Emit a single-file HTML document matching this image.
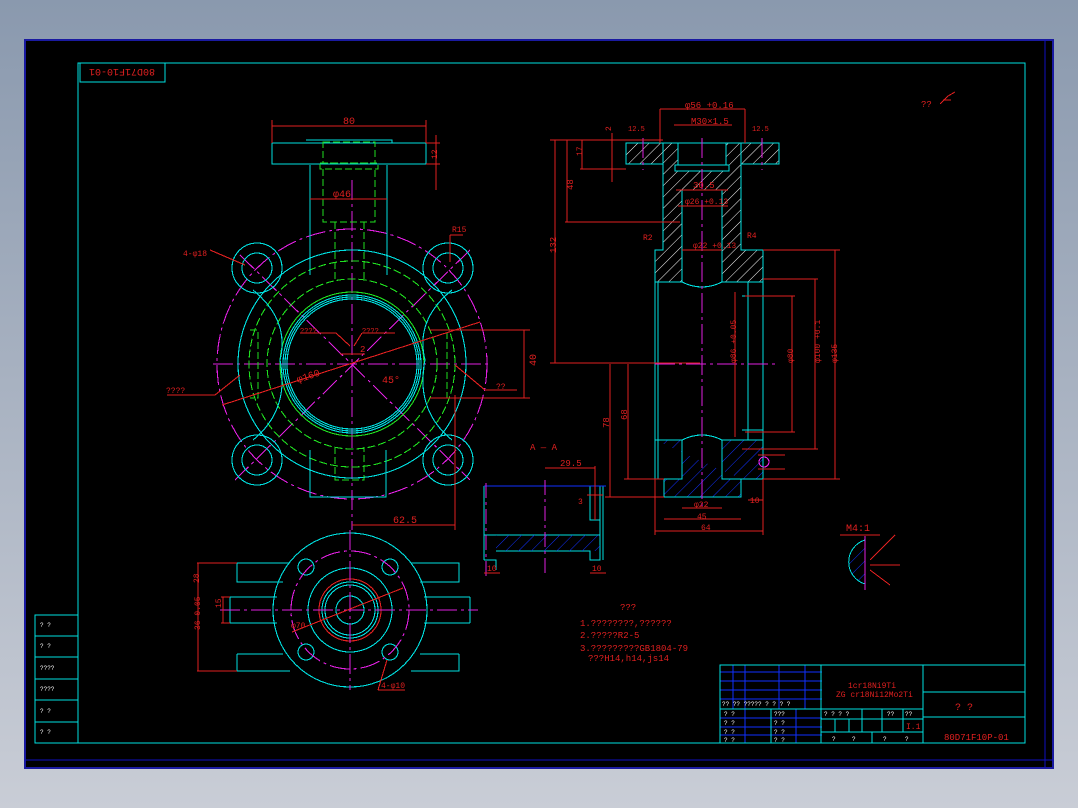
<!DOCTYPE html>
<html><head><meta charset="utf-8"><style>
html,body{margin:0;padding:0;width:1078px;height:808px;overflow:hidden;background:linear-gradient(#8a99ae,#c9cdd6);}
svg{position:absolute;left:0;top:0}
svg line,svg path,svg rect,svg circle{shape-rendering:crispEdges}
text{font-family:"Liberation Mono",monospace;}
</style></head><body>
<svg width="1078" height="808" viewBox="0 0 1078 808">
<defs>
<pattern id="hw" width="8" height="8" patternUnits="userSpaceOnUse" patternTransform="rotate(45)"><line x1="0" y1="0" x2="0" y2="8" stroke="#fff" stroke-width="1"/></pattern>
<pattern id="hb" width="9" height="9" patternUnits="userSpaceOnUse" patternTransform="rotate(45)"><line x1="0" y1="0" x2="0" y2="9" stroke="#1030ff" stroke-width="1"/></pattern>
</defs>
<rect x="25" y="40" width="1028" height="728" fill="#000" stroke="#1a1aa0" stroke-width="2"/>
<line x1="25" y1="760" x2="1053" y2="760" stroke="#1010c0"/>
<line x1="1045" y1="40" x2="1045" y2="768" stroke="#1010c0"/>
<rect x="78" y="63" width="947" height="680" fill="none" stroke="#00e0e0" stroke-width="1.3"/>
<rect x="80" y="63" width="85" height="19" fill="none" stroke="#00e0e0"/>
<text x="122" y="77" fill="#e02020" font-size="10" text-anchor="middle" transform="rotate(180 122 73)">80D71F10-01</text>
<!-- left strip -->
<g stroke="#00e0e0" fill="none"><rect x="35" y="615" width="43" height="128"/>
<line x1="35" y1="636" x2="78" y2="636"/><line x1="35" y1="657" x2="78" y2="657"/><line x1="35" y1="679" x2="78" y2="679"/><line x1="35" y1="700" x2="78" y2="700"/><line x1="35" y1="722" x2="78" y2="722"/></g>
<g fill="#fff" font-size="6"><text x="40" y="627">? ?</text><text x="40" y="648">? ?</text><text x="40" y="670">????</text><text x="40" y="691">????</text><text x="40" y="713">? ?</text><text x="40" y="734">? ?</text></g>

<!-- FRONT VIEW -->
<g fill="none" stroke-width="1.1">
<circle cx="352" cy="364" r="135" stroke="#e020e0" stroke-dasharray="20 4 3 4"/>
<line x1="213" y1="364" x2="492" y2="364" stroke="#e020e0" stroke-dasharray="20 4 3 4"/>
<line x1="352" y1="180" x2="352" y2="530" stroke="#e020e0" stroke-dasharray="20 4 3 4"/>
<line x1="240" y1="255" x2="470" y2="480" stroke="#e020e0" stroke-dasharray="20 4 3 4"/>
<line x1="470" y1="250" x2="235" y2="480" stroke="#e020e0" stroke-dasharray="20 4 3 4"/>
<circle cx="352" cy="364" r="114" stroke="#00e0e0"/>
<circle cx="352" cy="364" r="103" stroke="#20e020" stroke-dasharray="8 3"/>
<circle cx="352" cy="364" r="85" stroke="#20e020" stroke-dasharray="8 3"/>
<circle cx="352" cy="364" r="72" stroke="#20e020"/>
<circle cx="352" cy="364" r="69" stroke="#00e0e0"/>
<circle cx="352" cy="364" r="67" stroke="#00e0e0"/>
<circle cx="352" cy="364" r="65" stroke="#00e0e0"/>
<g stroke="#00e0e0">
<circle cx="257" cy="268" r="25"/><circle cx="257" cy="268" r="15"/>
<circle cx="448" cy="268" r="25"/><circle cx="448" cy="268" r="15"/>
<circle cx="257" cy="460" r="25"/><circle cx="257" cy="460" r="15"/>
<circle cx="448" cy="460" r="25"/><circle cx="448" cy="460" r="15"/>
<path d="M272 143H426V164H272Z M306 140H392V143"/>
<path d="M310 165V275 M387 165V275 M310 450V497H386V450"/>
<path d="M253 290 Q290 320 280 360 Q290 410 253 440 M452 290 Q415 320 425 360 Q415 410 452 440"/>
</g>
<g stroke="#20e020" stroke-dasharray="7 3">
<rect x="323" y="142" width="52" height="21"/><rect x="320" y="163" width="58" height="6"/>
<path d="M323 169V222H375V169 M335 222V280 M364 222V280 M335 447V480H364V447"/>
<path d="M250 330H258V398H250 M455 330H447V398H455"/>
</g>
<g stroke="#e02020">
<line x1="272" y1="126" x2="426" y2="126"/><line x1="272" y1="120" x2="272" y2="143"/><line x1="426" y1="120" x2="426" y2="143"/>
<line x1="436" y1="135" x2="436" y2="190"/><line x1="426" y1="143" x2="440" y2="143"/><line x1="426" y1="164" x2="440" y2="164"/>
<line x1="310" y1="199" x2="387" y2="199"/>
<line x1="222" y1="405" x2="480" y2="322"/>
<line x1="430" y1="330" x2="530" y2="330"/><line x1="430" y1="398" x2="530" y2="398"/><line x1="524" y1="330" x2="524" y2="398"/>
<line x1="455" y1="365" x2="485" y2="390"/><line x1="485" y1="390" x2="517" y2="390"/>
<line x1="455" y1="395" x2="455" y2="530"/><line x1="352" y1="525" x2="455" y2="525"/>
<line x1="167" y1="395" x2="215" y2="395"/><line x1="215" y1="395" x2="240" y2="375"/>
<line x1="210" y1="250" x2="245" y2="265"/><line x1="450" y1="235" x2="450" y2="262"/><line x1="450" y1="235" x2="463" y2="235"/>
<line x1="300" y1="333" x2="336" y2="333"/><line x1="336" y1="333" x2="350" y2="346"/><line x1="362" y1="333" x2="395" y2="333"/><line x1="362" y1="333" x2="354" y2="346"/>
<line x1="340" y1="354" x2="365" y2="354"/>
</g>
</g>
<g fill="#e02020" font-size="10">
<text x="343" y="124">80</text><text x="333" y="197">φ46</text>
<text x="428" y="160" font-size="8" transform="rotate(-90 432 155)">12</text>
<text x="183" y="256" font-size="8">4-φ18</text><text x="452" y="232" font-size="8">R15</text>
<text x="300" y="333" font-size="7">????</text><text x="362" y="333" font-size="7">????</text>
<text x="360" y="352" font-size="9">2</text>
<text x="297" y="382" transform="rotate(-18 300 380)">φ160</text>
<text x="382" y="383">45°</text><text x="496" y="389" font-size="8">??</text>
<text x="166" y="393" font-size="8">????</text>
<text x="533" y="369" transform="rotate(-90 533 366)">40</text>
<text x="393" y="523">62.5</text>
</g>

<!-- SIDE SECTION -->
<g fill="none" stroke-width="1.1">
<path d="M626 143H663V164H626Z M741 143H779V164H741Z" fill="url(#hw)" stroke="#00e0e0"/>
<path d="M663 143H741V250H763V282H722V250H722V190H682V250H682V282H655V250H663Z" fill="url(#hw)" stroke="#00e0e0"/>
<rect x="678" y="143" width="48" height="22" fill="#000" stroke="#00e0e0"/>
<rect x="675" y="165" width="54" height="6" fill="#000" stroke="#00e0e0"/>
<path d="M655 440H682V479H664V497H741V479H722V440H763V479H741" fill="url(#hb)" stroke="#00e0e0"/>
<path d="M655 282V479 M658 282V479 M763 282V479 M748 282V440 M742 296H763 M742 430H763 M682 282Q702 292 722 282 M682 440Q702 430 722 440" stroke="#00e0e0"/>
<g stroke="#00e0e0"><path d="M655 250V479 M763 250V479 M664 479V497H741V479"/></g>
<g stroke="#e020e0" stroke-dasharray="20 4 3 4"><line x1="702" y1="138" x2="702" y2="510"/><line x1="655" y1="364" x2="775" y2="364"/><line x1="643" y1="138" x2="643" y2="170"/><line x1="762" y1="138" x2="762" y2="170"/></g>
<circle cx="764" cy="462" r="5" stroke="#e020e0"/>
<g stroke="#e02020">
<line x1="660" y1="109" x2="745" y2="109"/><line x1="660" y1="109" x2="660" y2="143"/><line x1="745" y1="109" x2="745" y2="143"/>
<line x1="674" y1="125" x2="732" y2="125"/>
<line x1="550" y1="140" x2="663" y2="140"/><line x1="555" y1="140" x2="555" y2="363"/><line x1="550" y1="363" x2="700" y2="363"/>
<line x1="567" y1="140" x2="567" y2="222"/><line x1="565" y1="222" x2="680" y2="222"/>
<line x1="582" y1="140" x2="582" y2="169"/><line x1="580" y1="169" x2="626" y2="169"/>
<line x1="612" y1="133" x2="612" y2="182"/>
<line x1="676" y1="190" x2="728" y2="190"/><line x1="678" y1="206" x2="728" y2="206"/><line x1="682" y1="250" x2="722" y2="250"/>
<line x1="763" y1="250" x2="840" y2="250"/><line x1="835" y1="250" x2="835" y2="479"/><line x1="763" y1="479" x2="840" y2="479"/>
<line x1="763" y1="279" x2="818" y2="279"/><line x1="815" y1="279" x2="815" y2="449"/><line x1="742" y1="449" x2="818" y2="449"/>
<line x1="745" y1="296" x2="795" y2="296"/><line x1="792" y1="296" x2="792" y2="432"/><line x1="745" y1="432" x2="795" y2="432"/>
<line x1="735" y1="292" x2="735" y2="437"/>
<line x1="610" y1="364" x2="610" y2="497"/><line x1="605" y1="497" x2="664" y2="497"/>
<line x1="628" y1="364" x2="628" y2="479"/><line x1="624" y1="479" x2="664" y2="479"/>
<line x1="682" y1="508" x2="722" y2="508"/><line x1="664" y1="519" x2="741" y2="519"/><line x1="655" y1="531" x2="763" y2="531"/>
<line x1="655" y1="479" x2="655" y2="535"/><line x1="763" y1="479" x2="763" y2="535"/>
<line x1="748" y1="500" x2="763" y2="500"/>
<line x1="758" y1="455" x2="785" y2="455"/><line x1="758" y1="469" x2="785" y2="469"/>
</g>
</g>
<g fill="#e02020" font-size="9">
<text x="685" y="108">φ56 +0.16</text><text x="691" y="124">M30×1.5</text>
<text x="693" y="188">30.5</text><text x="685" y="204" font-size="8">φ26 +0.13</text>
<text x="693" y="248" font-size="8">φ22 +0.13</text>
<text x="566" y="197" transform="rotate(-90 566 190)">48</text>
<text x="553" y="260" transform="rotate(-90 551 255)">132</text>
<text x="580" y="162" font-size="8" transform="rotate(-90 578 158)">17</text>
<text x="611" y="135" font-size="8" transform="rotate(-90 609 133)">2</text>
<text x="628" y="131" font-size="7">12.5</text><text x="752" y="131" font-size="7">12.5</text>
<text x="608" y="433" transform="rotate(-90 606 430)">78</text>
<text x="626" y="425" transform="rotate(-90 624 422)">68</text>
<text x="733" y="370" font-size="8" transform="rotate(-90 731 365)">φ86 +0.05</text>
<text x="790" y="370" font-size="8" transform="rotate(-90 788 365)">φ80</text>
<text x="812" y="375" font-size="8" transform="rotate(-90 810 365)">φ100 +0.1</text>
<text x="832" y="372" font-size="8" transform="rotate(-90 830 365)">φ135</text>
<text x="694" y="507" font-size="8">φ22</text><text x="697" y="519" font-size="8">45</text>
<text x="701" y="530" font-size="8">64</text><text x="750" y="503" font-size="8">10</text>
<text x="643" y="240" font-size="8">R2</text><text x="747" y="238" font-size="8">R4</text>
</g>

<!-- SECTION A-A -->
<g fill="none" stroke-width="1.1">
<text x="530" y="450" fill="#e02020" font-size="9" stroke="none">A — A</text>
<path d="M484 486H590 M484 486V560 M484 560H496V570 M484 535H600V560H590V551H496" stroke="#00e0e0"/>
<path d="M496 535H600V551H590V551H496Z" fill="url(#hb)" stroke="none"/>
<path d="M600 486V535 M603 486V560 M590 486V520H600" stroke="#00e0e0"/>
<path d="M484 486H606" stroke="#1030ff"/>
<line x1="545" y1="480" x2="545" y2="577" stroke="#e020e0" stroke-dasharray="15 4 3 4"/>
<line x1="486" y1="483" x2="486" y2="577" stroke="#e020e0" stroke-dasharray="15 4 3 4"/>
<g stroke="#e02020"><line x1="545" y1="468" x2="595" y2="468"/><line x1="595" y1="466" x2="595" y2="520"/><line x1="587" y1="495" x2="603" y2="495"/>
<line x1="484" y1="573" x2="500" y2="573"/><line x1="590" y1="573" x2="606" y2="573"/></g>
</g>
<g fill="#e02020" font-size="9"><text x="560" y="466">29.5</text><text x="578" y="504" font-size="8">3</text>
<text x="487" y="571" font-size="8">10</text><text x="592" y="571" font-size="8">10</text></g>

<!-- BOTTOM VIEW -->
<g fill="none" stroke-width="1.1">
<g stroke="#00e0e0">
<path d="M237 563H290 M237 563V582H283 M411 563H459V582H420 M237 654H283 M237 654V671H290 M459 654V671H411 M420 654H459"/>
<path d="M230 597H277 M230 623H277 M230 597V623 M424 597H470 M424 623H470 M470 597V623"/>
<circle cx="350" cy="610" r="77"/><circle cx="350" cy="610" r="42"/><circle cx="350" cy="610" r="28"/><circle cx="350" cy="610" r="25"/><circle cx="350" cy="610" r="14"/>
<circle cx="306" cy="567" r="8"/><circle cx="390" cy="567" r="8"/><circle cx="306" cy="652" r="8"/><circle cx="390" cy="652" r="8"/>
</g>
<circle cx="350" cy="610" r="59" stroke="#e020e0" stroke-dasharray="20 4 3 4"/>
<circle cx="350" cy="610" r="31" stroke="#e02020"/>
<line x1="220" y1="610" x2="478" y2="610" stroke="#e020e0" stroke-dasharray="20 4 3 4"/>
<line x1="350" y1="530" x2="350" y2="690" stroke="#e020e0" stroke-dasharray="20 4 3 4"/>
<g stroke="#e02020"><line x1="197" y1="563" x2="237" y2="563"/><line x1="197" y1="671" x2="237" y2="671"/><line x1="198" y1="563" x2="198" y2="671"/>
<line x1="221" y1="597" x2="230" y2="597"/><line x1="221" y1="623" x2="230" y2="623"/><line x1="223" y1="597" x2="223" y2="623"/>
<line x1="292" y1="632" x2="403" y2="588"/><line x1="387" y1="660" x2="378" y2="690"/><line x1="378" y1="690" x2="405" y2="690"/></g>
</g>
<g fill="#e02020" font-size="8"><text x="196" y="590" transform="rotate(-90 194 585)">28</text>
<text x="220" y="613" transform="rotate(-90 218 610)">15</text><text x="194" y="640" transform="rotate(-90 192 632)">36-0.05</text>
<text x="291" y="628">φ70</text><text x="381" y="688">4-φ10</text></g>

<!-- M4:1 detail -->
<text x="846" y="531" fill="#e02020" font-size="10">M4:1</text>
<line x1="840" y1="535" x2="880" y2="535" stroke="#e02020"/>
<path d="M865 540A23 23 0 0 0 865 584Z" fill="url(#hb)" stroke="#00e0e0"/>
<path d="M865 536V590" stroke="#e020e0"/>
<path d="M870 560L895 535 M870 565L900 565 M870 570L890 585" stroke="#e02020"/>

<!-- notes -->
<g fill="#e02020" font-size="9">
<text x="620" y="610">???</text>
<text x="580" y="626">1.????????,??????</text>
<text x="580" y="638">2.?????R2-5</text>
<text x="580" y="651">3.?????????GB1804-79</text>
<text x="588" y="661">???H14,h14,js14</text>
<text x="921" y="107">??</text>
</g>
<path d="M940 104L948 96 M948 96L955 92 M943 100H951" stroke="#e02020" fill="none"/>

<!-- title block -->
<g fill="none">
<g stroke="#1030ff"><line x1="720" y1="672" x2="822" y2="672"/><line x1="720" y1="681" x2="822" y2="681"/><line x1="720" y1="690" x2="822" y2="690"/><line x1="720" y1="699" x2="822" y2="699"/>
<line x1="733" y1="665" x2="733" y2="709"/><line x1="745" y1="665" x2="745" y2="709"/><line x1="779" y1="665" x2="779" y2="709"/><line x1="805" y1="665" x2="805" y2="709"/>
<line x1="720" y1="718" x2="822" y2="718"/><line x1="720" y1="727" x2="822" y2="727"/><line x1="720" y1="735" x2="822" y2="735"/><line x1="745" y1="709" x2="745" y2="743"/><line x1="796" y1="709" x2="796" y2="743"/></g>
<g stroke="#00e0e0" stroke-width="1.2"><rect x="720" y="665" width="305" height="78"/>
<line x1="821" y1="665" x2="821" y2="743"/><line x1="923" y1="665" x2="923" y2="743"/>
<line x1="720" y1="709" x2="923" y2="709"/><line x1="771" y1="709" x2="771" y2="743"/>
<line x1="821" y1="719" x2="923" y2="719"/><line x1="821" y1="732" x2="923" y2="732"/>
<line x1="862" y1="709" x2="862" y2="732"/><line x1="882" y1="709" x2="882" y2="732"/><line x1="903" y1="709" x2="903" y2="732"/>
<line x1="835" y1="719" x2="835" y2="732"/><line x1="849" y1="719" x2="849" y2="732"/>
<line x1="872" y1="732" x2="872" y2="743"/>
<line x1="923" y1="692" x2="1025" y2="692"/><line x1="923" y1="717" x2="1025" y2="717"/></g>
</g>
<g fill="#fff" font-size="6">
<text x="722" y="706">?? ?? ????? ? ? ? ?</text>
<text x="724" y="716">? ?</text><text x="724" y="725">? ?</text><text x="724" y="734">? ?</text><text x="724" y="742">? ?</text>
<text x="774" y="716">???</text><text x="774" y="725">? ?</text><text x="774" y="734">? ?</text><text x="774" y="742">? ?</text>
<text x="824" y="716">? ? ? ?</text><text x="887" y="716">??</text><text x="905" y="716">??</text>
<text x="832" y="741">?</text><text x="852" y="741">?</text><text x="883" y="741">?</text><text x="905" y="741">?</text>
</g>
<g fill="#e02020">
<text x="848" y="688" font-size="8">1cr18Ni9Ti</text>
<text x="836" y="697" font-size="8">ZG cr18Ni12Mo2Ti</text>
<text x="906" y="729" font-size="8">I.1</text>
<text x="955" y="710" font-size="10">?    ?</text>
<text x="944" y="740" font-size="9">80D71F10P-01</text>
</g>
</svg>
</body></html>
